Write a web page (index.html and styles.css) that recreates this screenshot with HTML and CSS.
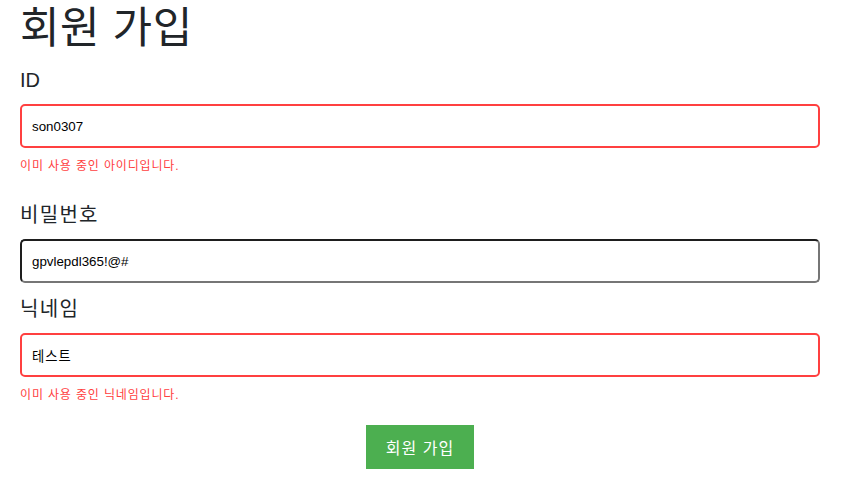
FILE: index.html
```html
<!DOCTYPE html>
<html lang="ko">
<head>
<meta charset="utf-8">
<title>회원 가입</title>
<link rel="stylesheet" href="styles.css">
</head>
<body>
<div class="page">
  <h1 class="title">회원 가입</h1>
  <form class="form">
    <div class="field">
      <label class="label" for="uid">ID</label>
      <input class="input input-error" id="uid" type="text" value="son0307">
      <p class="error">이미 사용 중인 아이디입니다.</p>
    </div>
    <div class="field">
      <label class="label label-ko" for="pw">비밀번호</label>
      <input class="input input-focus" id="pw" type="text" value="gpvlepdl365!@#">
    </div>
    <div class="field">
      <label class="label label-ko" for="nick">닉네임</label>
      <input class="input input-error input-ko" id="nick" type="text" value="테스트">
      <p class="error">이미 사용 중인 닉네임입니다.</p>
    </div>
    <div class="actions">
      <button class="submit" type="button">회원 가입</button>
    </div>
  </form>
</div>
</body>
</html>
```

FILE: styles.css
```css
* { box-sizing: border-box; }

html, body {
  margin: 0;
  padding: 0;
  background: #ffffff;
}

body {
  font-family: "Liberation Sans", "Noto Sans CJK KR", sans-serif;
  color: #212529;
}

.page {
  width: 800px;
  margin: 0 20px;
  padding-top: 4px;
}

.title {
  margin: 0 0 16px;
  font-size: 43px;
  line-height: 48px;
  font-weight: 400;
  letter-spacing: 0.5px;
  color: #212529;
}

.form {
  display: flex;
  flex-direction: column;
}

.field {
  display: flex;
  flex-direction: column;
}

.field + .field {
  margin-top: 14px;
}

.label {
  display: block;
  font-size: 20px;
  line-height: 24px;
  margin-bottom: 12px;
  color: #212529;
}

.label-ko {
  letter-spacing: 1.3px;
}

.input {
  display: block;
  width: 100%;
  height: 44px;
  padding: 0 10px;
  border-radius: 5px;
  font-family: "Liberation Sans", "Noto Sans CJK KR", sans-serif;
  font-size: 13.333px;
  color: #000000;
  background: #ffffff;
  outline: none;
}

.input-ko {
  letter-spacing: 1px;
}

.input-error {
  border: 2px solid #ff4040;
}

.input-focus {
  border-style: solid;
  border-width: 2px;
  border-color: #1e1e1e #767676 #767676 #1e1e1e;
}

.error {
  margin: 10px 0 15px;
  font-size: 12px;
  line-height: 16px;
  letter-spacing: 0.85px;
  color: #ff4040;
}

.actions {
  display: flex;
  justify-content: center;
  margin-top: 7px;
}

.submit {
  height: 44px;
  padding: 0 20px;
  border: none;
  background: #4caf50;
  color: #ffffff;
  font-family: "Liberation Sans", "Noto Sans CJK KR", sans-serif;
  font-size: 16px;
  letter-spacing: 1px;
  cursor: pointer;
}
```
